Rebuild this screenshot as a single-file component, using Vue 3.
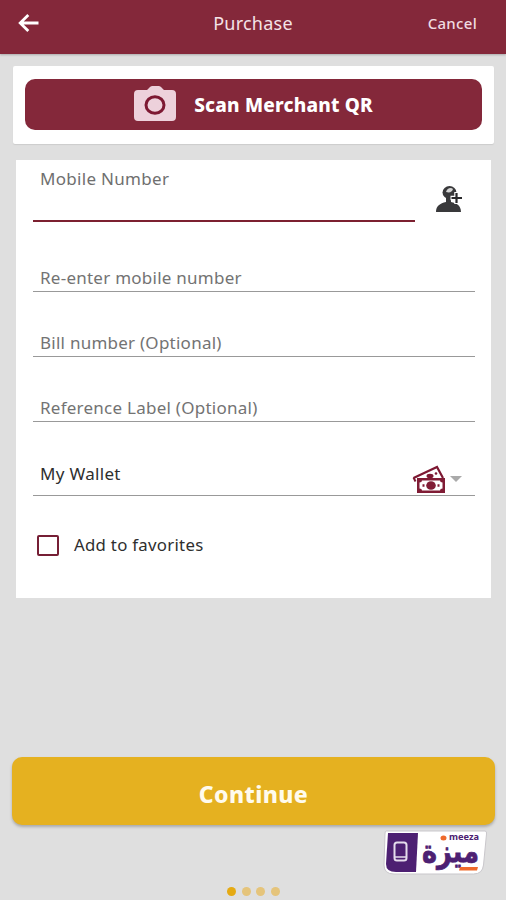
<template>
  <div class="screen">
    <header class="topbar">
      <button class="back-btn" aria-label="Back">
        <svg viewBox="0 0 22 20" width="22" height="20">
          <path d="M20.5 10H3M10.3 2L2.2 10l8.1 8" />
        </svg>
      </button>
      <h1 class="title">Purchase</h1>
      <button class="cancel-btn">Cancel</button>
    </header>

    <section class="scan-card">
      <button class="scan-btn">
        <svg class="camera" viewBox="0 0 42 35" width="42" height="35">
          <path
            d="M4 4h9l3-3q1-1 2.500-1h6q1.500 0 2.500 1l3 3h8q4 0 4 4v23q0 4-4 4H4q-4 0-4-4V8q0-4 4-4z"
            fill="#edd1db"
          />
          <ellipse cx="21" cy="19" rx="9" ry="8.300" fill="none" stroke="#7d1832" stroke-width="3" />
        </svg>
        <span>Scan Merchant QR</span>
      </button>
    </section>

    <section class="form-card">
      <div class="mobile-row">
        <div class="mobile-field">
          <label for="mobile">Mobile Number</label>
          <input id="mobile" v-model="mobile" type="tel" />
        </div>
        <button class="contact-btn" aria-label="Choose contact">
          <svg viewBox="0 0 27 28" width="27" height="28">
            <ellipse cx="13.500" cy="7.500" rx="7" ry="6.500" fill="#39393b" />
            <path d="M10 12h5v5c5 1 10 3 10 10H0c0-6 4-8.500 10-10z" fill="#39393b" />
            <path d="M10 7c1-4 5-5 7-3-1 3-3 4-7 3z" fill="#d6d6d6" />
            <path d="M20.500 7v12M14.500 13h12.500" stroke="#fff" stroke-width="4.500" />
            <path d="M20.500 8v10M15.500 13h10.500" stroke="#29292b" stroke-width="2.200" />
          </svg>
        </button>
      </div>

      <div v-for="field in fields" :key="field.id" class="field">
        <input v-model="field.value" :placeholder="field.label" :aria-label="field.label" />
      </div>

      <div class="wallet">
        <span>My Wallet</span>
        <svg class="money" viewBox="0 0 34 29" width="34" height="29">
          <path d="M1.500 13L25 2l6 11" fill="#fff" stroke="#7d1832" stroke-width="2.200" />
          <path d="M1.500 12.500l2 4" stroke="#7d1832" stroke-width="2" />
          <ellipse cx="18" cy="11" rx="3.500" ry="2.200" fill="#7d1832" />
          <circle cx="24" cy="8.500" r="1.300" fill="#7d1832" />
          <path d="M5 13h28v15H5z" fill="#801c35" />
          <path d="M10 15.500h18q0 2 2.500 2v6q-2.500 0-2.500 2H10q0-2-2.500-2v-6q2.500 0 2.500-2z" fill="#fff" />
          <ellipse cx="19" cy="20.500" rx="4.800" ry="4.300" fill="#801c35" />
          <path d="M10.500 20.500h2M25.500 20.500h2" stroke="#801c35" stroke-width="2.500" />
        </svg>
        <i class="caret"></i>
      </div>

      <label class="favorite">
        <input v-model="favorite" type="checkbox" />
        <span>Add to favorites</span>
      </label>
    </section>

    <button class="continue-btn">Continue</button>

    <svg class="meeza" viewBox="0 0 104 46" width="104" height="46">
      <path
        d="M3 1h99q2 0 1.500 3l-3 31q-1 9-10 9H11Q1 44 1 35L2 4q0-3 1-3z"
        fill="#fff"
        stroke="#c9c7cb"
      />
      <path d="M5 3h30l-2 39H13Q3 42 3 34z" fill="#4d2072" />
      <rect x="11.500" y="12.500" width="12" height="18" rx="2.500" fill="none" stroke="#e5dcec" stroke-width="2" />
      <path d="M12 27h11" stroke="#e5dcec" stroke-width="1.500" />
      <text x="66" y="9.500" class="meeza-en" textLength="30" lengthAdjust="spacingAndGlyphs">meeza</text>
      <text x="96" y="31.500" class="meeza-ar" direction="rtl" textLength="57" lengthAdjust="spacingAndGlyphs">ميزة</text>
      <path d="M77 37h18l-1 3.500H76z" fill="#ef6a2b" />
      <ellipse cx="60.500" cy="8" rx="3" ry="2.500" fill="#ef6a2b" />
    </svg>

    <div class="dots">
      <span v-for="n in 4" :key="n" :class="{ active: n === 1 }"></span>
    </div>
  </div>
</template>

<script setup>
import { ref } from "vue";

const mobile = ref("");
const favorite = ref(false);

const fields = ref([
  { id: "confirm", label: "Re-enter mobile number", value: "" },
  { id: "bill", label: "Bill number (Optional)", value: "" },
  { id: "reference", label: "Reference Label (Optional)", value: "" },
]);
</script>

<style>
body {
  margin: 0;
}
</style>

<style scoped>
.screen {
  width: 506px;
  height: 900px;
  display: flex;
  flex-direction: column;
  overflow: hidden;
  background: #dfdfdf;
  font-family: "Noto Sans", "Open Sans", sans-serif;
}

.screen * {
  box-sizing: border-box;
}

button,
input {
  font-family: inherit;
  border: 0;
  padding: 0;
  background: none;
}

.topbar {
  height: 54px;
  flex: none;
  display: grid;
  grid-template-columns: 80px 1fr 80px;
  align-items: center;
  padding: 0 18px 8px;
  background: #84283a;
  box-shadow: 0 1px 2px #aaa;
}

.back-btn {
  display: flex;
}

.back-btn svg {
  fill: none;
  stroke: #fff;
  stroke-width: 2.8;
}

.title {
  margin: 0;
  text-align: center;
  font-size: 18px;
  font-weight: 400;
  letter-spacing: 0.25px;
  color: #f4e3e7;
}

.cancel-btn {
  font-size: 15px;
  font-weight: 500;
  letter-spacing: 0.3px;
  color: #f0dce1;
  text-align: right;
  padding: 0 11px 1px 0;
}

.scan-card {
  height: 78px;
  flex: none;
  margin: 12px 12px 0 13px;
  padding: 13px 12px 14px;
  background: #fff;
  border-radius: 2px;
  box-shadow: 0 1px 1px #ccc;
}

.scan-btn {
  width: 100%;
  height: 51px;
  display: flex;
  align-items: center;
  justify-content: center;
  gap: 18px;
  border-radius: 10px;
  background: #84283a;
  color: #fff;
  font-size: 19px;
  font-weight: 800;
  letter-spacing: 0.2px;
}

.camera {
  margin-bottom: 2px;
}

.form-card {
  height: 438px;
  flex: none;
  margin: 16px 15px 0 16px;
  padding: 0 16px 0 17px;
  background: #fff;
}

.mobile-row {
  height: 62px;
  display: flex;
  justify-content: space-between;
}

.mobile-field {
  width: 382px;
  display: flex;
  flex-direction: column;
  padding: 7px 7px 0;
  border-bottom: 2px solid #7c2030;
}

.mobile-field label {
  font-size: 17px;
  line-height: 24px;
  letter-spacing: 0.3px;
  color: #6f6f6f;
}

.mobile-field input {
  height: 28px;
  outline: none;
}

.contact-btn {
  padding: 20px 12px 0 0;
}

.field {
  height: 65px;
  display: flex;
  align-items: flex-end;
  padding: 0 7px 2px;
  border-bottom: 1px solid #999;
}

.mobile-row + .field {
  height: 70px;
}

.field input {
  width: 100%;
  height: 24px;
  font-size: 17px;
  letter-spacing: 0.25px;
  outline: none;
}

.field input::placeholder {
  color: #737373;
  opacity: 1;
}

.wallet {
  height: 74px;
  display: flex;
  align-items: flex-end;
  padding: 0 13px 1px 7px;
  border-bottom: 1px solid #999;
  font-size: 17px;
  line-height: 24px;
  letter-spacing: 0.3px;
  color: #2e2e2e;
}

.wallet span {
  margin-bottom: 8px;
}

.money {
  margin-left: auto;
}

.caret {
  margin: 0 0 12px 4px;
  border: 6.5px solid transparent;
  border-top: 6px solid #aaa;
  border-bottom: 0;
}

.favorite {
  display: flex;
  align-items: center;
  gap: 15px;
  height: 24px;
  margin: 37px 0 0 4px;
  font-size: 16.8px;
  letter-spacing: 0.28px;
  color: #2e2e2e;
}

.favorite span {
  margin-bottom: 1px;
}

.favorite input {
  appearance: none;
  width: 22px;
  height: 21px;
  margin: 0;
  border: 2px solid #761f35;
  border-radius: 2px;
}

.favorite input:checked {
  background: #84283a;
}

.continue-btn {
  height: 68px;
  flex: none;
  margin: 159px 11px 0 12px;
  padding-top: 5px;
  border-radius: 10px;
  background: #e5b120;
  box-shadow: 0 2px 3px #aaa;
  color: #fffbed;
  font-size: 23px;
  font-weight: 800;
  letter-spacing: 0.4px;
}

.meeza {
  flex: none;
  margin: 5px 0 0 383px;
}

.meeza-en {
  font: 700 8.5px "Noto Sans", sans-serif;
  fill: #4d2072;
}

.meeza-ar {
  font: 700 31px "DejaVu Sans", sans-serif;
  fill: #4d2072;
  stroke: #4d2072;
  stroke-width: 0.8;
}

.dots {
  display: flex;
  gap: 5.7px;
  margin: 11px 0 0 227px;
}

.dots span {
  width: 9px;
  height: 9px;
  border-radius: 50%;
  background: #e5c47b;
}

.dots .active {
  background: #e5aa13;
}
</style>
